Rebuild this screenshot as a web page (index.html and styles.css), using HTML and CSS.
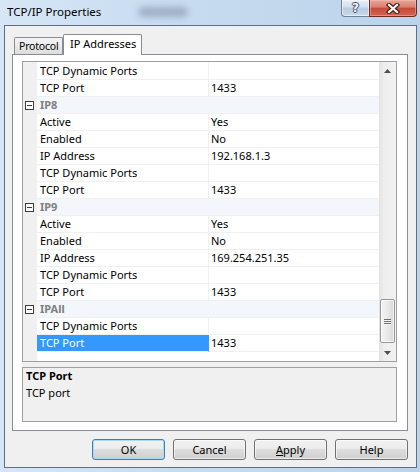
FILE: index.html
```html
<!DOCTYPE html>
<html>
<head>
<meta charset="utf-8">
<title>TCP/IP Properties</title>
<link rel="stylesheet" href="styles.css">
</head>
<body>
<div class="window">
  <div class="titlebar">
    <div class="ghost"></div>
    <span class="title">TCP/IP Properties</span>
    <div class="caps">
      <div class="cap cap-help"><span>?</span></div>
      <div class="cap cap-close">
        <svg width="14" height="11" viewBox="0 0 14 11">
          <path d="M3 2 L11 9 M11 2 L3 9" stroke="#4a1c16" stroke-width="4.4" stroke-linecap="square" fill="none"/>
          <path d="M3 2 L11 9 M11 2 L3 9" stroke="#ffffff" stroke-width="2.2" stroke-linecap="square" fill="none"/>
        </svg>
      </div>
    </div>
  </div>
  <div class="client">
    <div class="tabs">
      <div class="tab">Protocol</div>
      <div class="tab active">IP Addresses</div>
    </div>
    <div class="panel">
      <div class="pgrid">
        <div class="list">
          <div class="rows">
            <div class="row"><div class="gut"></div><div class="name">TCP Dynamic Ports</div><div class="val"></div></div>
            <div class="row"><div class="gut"></div><div class="name">TCP Port</div><div class="val">1433</div></div>
            <div class="row"><div class="gut"><span class="minus"></span></div><div class="cat">IP8</div></div>
            <div class="row"><div class="gut"></div><div class="name">Active</div><div class="val">Yes</div></div>
            <div class="row"><div class="gut"></div><div class="name">Enabled</div><div class="val">No</div></div>
            <div class="row"><div class="gut"></div><div class="name">IP Address</div><div class="val">192.168.1.3</div></div>
            <div class="row"><div class="gut"></div><div class="name">TCP Dynamic Ports</div><div class="val"></div></div>
            <div class="row"><div class="gut"></div><div class="name">TCP Port</div><div class="val">1433</div></div>
            <div class="row"><div class="gut"><span class="minus"></span></div><div class="cat">IP9</div></div>
            <div class="row"><div class="gut"></div><div class="name">Active</div><div class="val">Yes</div></div>
            <div class="row"><div class="gut"></div><div class="name">Enabled</div><div class="val">No</div></div>
            <div class="row"><div class="gut"></div><div class="name">IP Address</div><div class="val">169.254.251.35</div></div>
            <div class="row"><div class="gut"></div><div class="name">TCP Dynamic Ports</div><div class="val"></div></div>
            <div class="row"><div class="gut"></div><div class="name">TCP Port</div><div class="val">1433</div></div>
            <div class="row"><div class="gut"><span class="minus"></span></div><div class="cat">IPAll</div></div>
            <div class="row"><div class="gut"></div><div class="name">TCP Dynamic Ports</div><div class="val"></div></div>
            <div class="row"><div class="gut"></div><div class="name selected">TCP Port</div><div class="val">1433</div></div>
          </div>
          <div class="vscroll">
            <div class="arrow">
              <svg width="7" height="4" viewBox="0 0 7 4"><polygon points="3.5,0 7,4 0,4" fill="#4f4f4f"/></svg>
            </div>
            <div class="track">
              <div class="thumb"><span class="grip"></span><span class="grip"></span><span class="grip"></span></div>
            </div>
            <div class="arrow">
              <svg width="7" height="4" viewBox="0 0 7 4"><polygon points="0,0 7,0 3.5,4" fill="#4f4f4f"/></svg>
            </div>
          </div>
        </div>
        <div class="desc">
          <div class="desc-title">TCP Port</div>
          <div class="desc-text">TCP port</div>
        </div>
      </div>
    </div>
    <div class="buttons">
      <div class="btn default">OK</div>
      <div class="btn">Cancel</div>
      <div class="btn"><u>A</u>pply</div>
      <div class="btn">Help</div>
    </div>
  </div>
</div>
</body>
</html>
```
FILE: styles.css
```css
html, body {
  margin: 0;
  padding: 0;
}
body {
  width: 420px;
  height: 472px;
  overflow: hidden;
  font-family: "Noto Sans", "Open Sans", sans-serif;
  font-size: 11px;
  color: #000;
}
.window {
  height: 472px;
  display: flex;
  flex-direction: column;
  background: linear-gradient(to right, #d6e6f6 0%, #c8dcf0 40%, #bcd3ea 100%);
}
.titlebar {
  height: 25px;
  display: flex;
  align-items: flex-start;
  position: relative;
  flex: none;
}
.ghost {
  position: absolute;
  left: 138px;
  top: 7px;
  width: 50px;
  height: 10px;
  border-radius: 5px;
  background: rgba(80, 95, 120, 0.35);
  filter: blur(3px);
}
.title {
  margin: 4px 0 0 7px;
  font-size: 11.5px;
  line-height: 16px;
  white-space: nowrap;
  position: relative;
}
.caps {
  margin-left: auto;
  margin-right: 3px;
  display: flex;
}
.cap {
  height: 17px;
  box-sizing: border-box;
  display: flex;
  align-items: center;
  justify-content: center;
}
.cap-help {
  width: 28px;
  border: 1px solid #6f8299;
  border-top: none;
  border-right: none;
  border-radius: 0 0 0 4px;
  background: linear-gradient(#e6eef7 0%, #d3dfed 45%, #b9cbe0 50%, #c9d9ea 100%);
  box-shadow: inset 0 0 0 1px rgba(255,255,255,0.5);
}
.cap-help span {
  font-family: "DejaVu Sans", sans-serif;
  font-size: 12px;
  font-weight: bold;
  line-height: 14px;
  color: #f4f7fb;
  text-shadow: 1px 0 0 #3e4d63, -1px 0 0 #3e4d63, 0 1px 0 #3e4d63, 0 -1px 0 #3e4d63;
}
.cap-close {
  width: 48px;
  border: 1px solid #6e2a22;
  border-top: none;
  border-radius: 0 0 4px 0;
  background: linear-gradient(#e7a597 0%, #d9806f 45%, #c44a3a 50%, #d4634f 100%);
  box-shadow: inset 0 0 0 1px rgba(255,200,190,0.45);
}
.client {
  flex: 1;
  margin: 0 3px 4px 4px;
  border: 1px solid #5d6f86;
  background: #f0f0f0;
  display: flex;
  flex-direction: column;
  padding: 8px 8px 0 7px;
}
.tabs {
  display: flex;
  align-items: flex-end;
  height: 20px;
  padding-left: 2px;
  position: relative;
  z-index: 2;
}
.tab {
  box-sizing: border-box;
  height: 17px;
  width: 49px;
  border: 1px solid #898c95;
  border-bottom: none;
  border-radius: 2px 2px 0 0;
  background: linear-gradient(#f3f3f3 0%, #ebebeb 50%, #dcdcdc 100%);
  font-size: 10.5px;
  letter-spacing: -0.2px;
  line-height: 16px;
  padding-left: 4px;
  white-space: nowrap;
}
.tab.active {
  height: 21px;
  width: 79px;
  margin-bottom: -1px;
  background: #fff;
  padding-left: 6px;
  font-size: 11px;
  letter-spacing: 0;
  line-height: 18px;
}
.panel {
  box-sizing: border-box;
  height: 377px;
  border: 1px solid #898c95;
  background: #fff;
  padding: 6px 0 0 9px;
}
.pgrid {
  width: 375px;
  display: flex;
  flex-direction: column;
  background: #f0f0f0;
}
.list {
  box-sizing: border-box;
  height: 301px;
  border: 1px solid #a0a0a0;
  display: flex;
  background: #fff;
}
.rows {
  flex: 1;
  padding-top: 1px;
  background: linear-gradient(to right, #f0f0f0 14px, #fff 14px);
}
.row {
  display: grid;
  grid-template-columns: 14px 172px 1fr;
  height: 17px;
}
.gut {
  display: flex;
  align-items: center;
  padding-left: 2px;
}
.minus {
  box-sizing: border-box;
  width: 9px;
  height: 9px;
  border: 1px solid #3c3c3c;
  background: #fff linear-gradient(#3c3c3c, #3c3c3c) center / 5px 1px no-repeat;
}
.name, .val, .cat {
  box-sizing: border-box;
  border-bottom: 1px solid #f0f0f0;
  line-height: 16px;
  white-space: nowrap;
  overflow: hidden;
}
.name {
  border-right: 1px solid #f0f0f0;
  padding-left: 3px;
}
.name.selected {
  background: #3399ff;
  color: #fff;
  border-right-color: #3399ff;
}
.val {
  padding-left: 2px;
}
.cat {
  grid-column: 2 / 4;
  background: #f3f6fb;
  font-weight: bold;
  color: #7f7f7f;
  padding-left: 3px;
}
.vscroll {
  width: 17px;
  display: flex;
  flex-direction: column;
  background: linear-gradient(to right, #e3e3e3, #eeeeee 30%, #f2f2f2);
}
.arrow {
  height: 17px;
  display: flex;
  align-items: center;
  justify-content: center;
}
.track {
  flex: 1;
  padding: 220px 1px 0 1px;
}
.thumb {
  box-sizing: border-box;
  height: 44px;
  border: 1px solid #979797;
  border-radius: 2px;
  background: linear-gradient(to right, #f4f4f4, #e9e9e9 50%, #d8d8d8);
  box-shadow: inset 0 0 0 1px rgba(255,255,255,0.7);
  display: flex;
  flex-direction: column;
  align-items: center;
  justify-content: center;
  gap: 1px;
}
.grip {
  width: 7px;
  height: 1px;
  background: #6f6f6f;
  box-shadow: 0 1px 0 #f6f6f6;
}
.desc {
  box-sizing: border-box;
  margin-top: 5px;
  height: 55px;
  border: 1px solid #a0a0a0;
  background: #f0f0f0;
  padding: 0 3px;
}
.desc-title {
  font-weight: bold;
  line-height: 16px;
}
.desc-text {
  line-height: 16px;
  margin-top: 1px;
}
.buttons {
  display: flex;
  justify-content: flex-end;
  gap: 8px;
  margin-top: 8px;
  margin-right: -7px;
  padding-right: 7px;
}
.btn {
  box-sizing: border-box;
  width: 73px;
  height: 21px;
  border: 1px solid #707070;
  border-radius: 3px;
  background: linear-gradient(#f2f2f2 0%, #ebebeb 50%, #dddddd 50%, #cfcfcf 100%);
  box-shadow: inset 0 0 0 1px rgba(255,255,255,0.6);
  text-align: center;
  font-size: 11px;
  line-height: 19px;
}
.btn.default {
  border-color: #3c7fb1;
  box-shadow: inset 0 0 0 1px #a6dcf6;
}
.btn u {
  text-decoration: underline;
}
```
